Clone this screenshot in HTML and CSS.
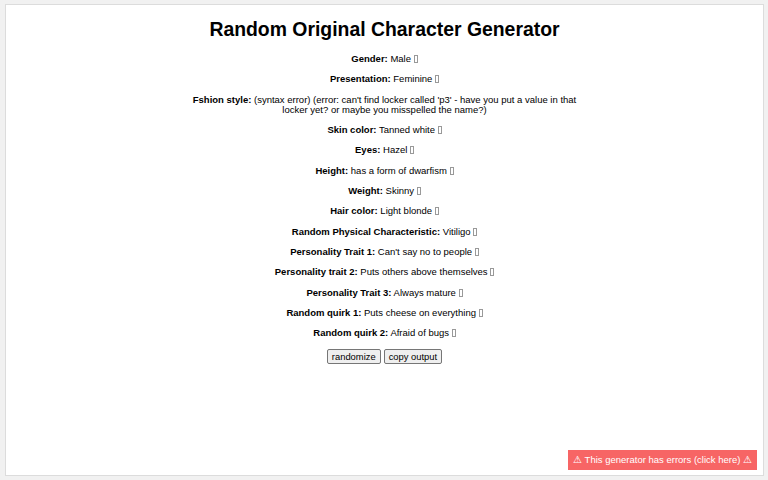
FILE: index.html
```html
<!DOCTYPE html>
<html>
<head>
<meta charset="utf-8">
<link rel="stylesheet" href="styles.css">
</head>
<body>
<div class="panel">
  <h1 class="title">Random Original Character Generator</h1>
  <div class="output">
    <p class="item"><b>Gender:</b> Male <span class="tofu"></span></p>
    <p class="item"><b>Presentation:</b> Feminine <span class="tofu"></span></p>
    <p class="item"><b>Fshion style:</b> (syntax error) (error: can't find locker called 'p3' - have you put a value in that locker yet? or maybe you misspelled the name?)</p>
    <p class="item"><b>Skin color:</b> Tanned white <span class="tofu"></span></p>
    <p class="item"><b>Eyes:</b> Hazel <span class="tofu"></span></p>
    <p class="item"><b>Height:</b> has a form of dwarfism <span class="tofu"></span></p>
    <p class="item"><b>Weight:</b> Skinny <span class="tofu"></span></p>
    <p class="item"><b>Hair color:</b> Light blonde <span class="tofu"></span></p>
    <p class="item"><b>Random Physical Characteristic:</b> Vitiligo <span class="tofu"></span></p>
    <p class="item"><b>Personality Trait 1:</b> Can't say no to people <span class="tofu"></span></p>
    <p class="item"><b>Personality trait 2:</b> Puts others above themselves <span class="tofu"></span></p>
    <p class="item"><b>Personality Trait 3:</b> Always mature <span class="tofu"></span></p>
    <p class="item"><b>Random quirk 1:</b> Puts cheese on everything <span class="tofu"></span></p>
    <p class="item"><b>Random quirk 2:</b> Afraid of bugs <span class="tofu"></span></p>
  </div>
  <div class="buttons">
    <button class="btn">randomize</button>
    <button class="btn">copy output</button>
  </div>
</div>
<div class="errors">⚠ This generator has errors (click here) ⚠</div>
</body>
</html>
```
FILE: styles.css
```css
html, body {
  margin: 0;
  padding: 0;
}
body {
  background: #f1f1f1;
  padding: 4px 4px 4px 5px;
  height: 480px;
  box-sizing: border-box;
  font-family: "Liberation Sans", Arial, sans-serif;
  color: #000;
}
.panel {
  background: #fff;
  border: 1px solid #dcdcdc;
  height: 100%;
  box-sizing: border-box;
  display: flex;
  flex-direction: column;
  align-items: center;
}
.title {
  font-size: 19.4px;
  font-weight: bold;
  margin: 12px 0 13px;
  line-height: 24px;
}
.output {
  width: 396px;
  display: flex;
  flex-direction: column;
  align-items: center;
  text-align: center;
}
.item {
  font-size: 9.5px;
  line-height: 10.3px;
  margin: 0 0 10px;
}
.item b {
  font-weight: bold;
}
.tofu {
  display: inline-block;
  width: 4px;
  height: 8px;
  border: 1px solid #999;
  box-sizing: border-box;
  vertical-align: -1px;
}
.buttons {
  display: flex;
  gap: 3px;
  margin-top: 1px;
}
.btn {
  font-family: "Liberation Sans", Arial, sans-serif;
  font-size: 9.4px;
  padding: 1px 4px;
  height: 15px;
  line-height: 11px;
  background: #efefef;
  border: 1px solid #767676;
  border-radius: 2px;
  color: #000;
}
.errors {
  position: absolute;
  right: 11px;
  bottom: 10px;
  background: #f76565;
  color: #fff;
  font-size: 9.5px;
  padding: 0 5px;
  height: 20px;
  line-height: 20px;
}
```
